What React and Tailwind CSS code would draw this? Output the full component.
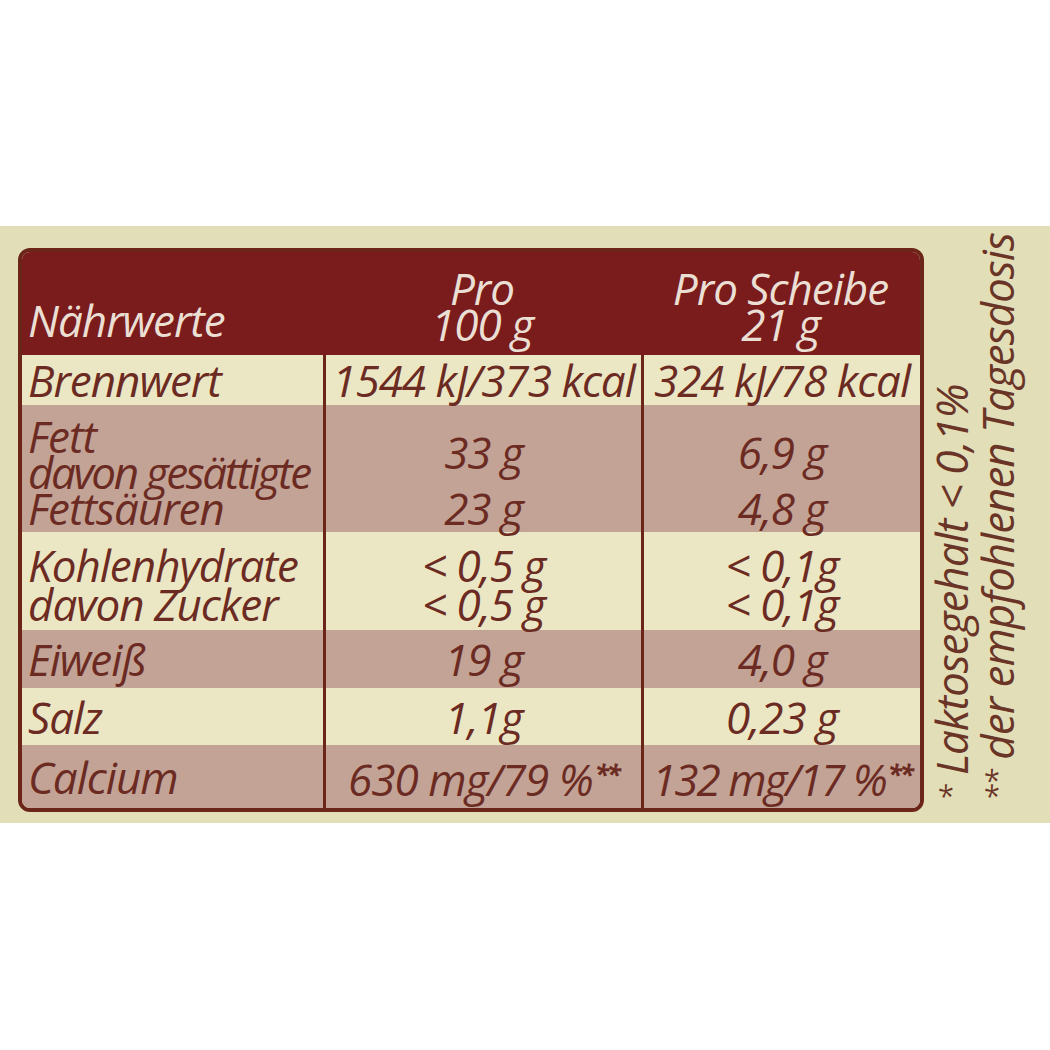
const font = { fontFamily: '"Open Sans", "Lato", sans-serif' };

const rows = [
  { bg: 'bg-[#ebe7c4]', h: 'h-[50px]', label: ['Brennwert'], a: ['1544 kJ/373 kcal'], b: ['324 kJ/78 kcal'], center: true },
  { bg: 'bg-[#c2a396]', h: 'h-[127px]', label: ['Fett', 'davon gesättigte', 'Fettsäuren'], a: ['33 g', '23 g'], b: ['6,9 g', '4,8 g'], fat: true },
  { bg: 'bg-[#ebe7c4]', h: 'h-[98px]', label: ['Kohlenhydrate', 'davon Zucker'], a: ['< 0,5 g', '< 0,5 g'], b: ['< 0,1g', '< 0,1g'], carbs: true },
  { bg: 'bg-[#c2a396]', h: 'h-[58px]', label: ['Eiweiß'], a: ['19 g'], b: ['4,0 g'], center: true },
  { bg: 'bg-[#ebe7c4]', h: 'h-[57px]', label: ['Salz'], a: ['1,1g'], b: ['0,23 g'], center: true },
  { bg: 'bg-[#c2a396]', h: 'h-[63px]', label: ['Calcium'], a: ['630 mg/79 %'], b: ['132 mg/17 %'], center: true, star: true },
];

// condensed a touch where the print is tighter than Open Sans
const tight = { 'davon gesättigte': 'tracking-[-2.4px]', '132 mg/17 %': 'tracking-[-2px]' };

function Cell({ row, lines, value }) {
  const star = row.star && value;
  if (row.center) {
    return (
      <div className={`flex flex-1 items-center ${value ? 'justify-center' : 'pl-[6px]'}`}>
        <span className={`leading-[40px] whitespace-nowrap ${tight[lines[0]] || ''}`}>
          {lines[0]}
          {star && <span className="text-[26px] align-[12px] ml-[2px] font-bold tracking-[-2px]">**</span>}
        </span>
      </div>
    );
  }
  if (row.fat && value) {
    return (
      <div className="flex flex-col items-center pt-[29px] gap-[20px] leading-[36px]">
        {lines.map((l, i) => <span key={i}>{l}</span>)}
      </div>
    );
  }
  return (
    <div
      className={`flex flex-col ${value ? 'items-center' : 'pl-[6px]'} ${row.fat ? 'pt-[13px] leading-[36px]' : 'pt-[14px] leading-[39px]'}`}
    >
      {lines.map((l, i) => (
        <span key={i} className={`whitespace-nowrap ${tight[l] || ''}`}>{l}</span>
      ))}
    </div>
  );
}

export default function App() {
  return (
    <div className="bg-white w-[1050px] h-[1050px] pt-[226px] overflow-hidden" style={font}>
      <div className="bg-[#e2dfb8] h-[597px] flex items-start">
        <div className="ml-[18px] mt-[22px] w-[906px] shrink-0 border-[4px] border-[#6b2519] rounded-t-[12px] rounded-b-[12px] overflow-hidden italic font-medium text-[44px] tracking-[-1px]">
          <div className="bg-[#7a1c1c] h-[103px] grid grid-cols-[301px_318px_279px] text-[#ebdfd4]">
            <div className="flex items-end pb-[15px] pl-[6px]">
              <span className="leading-[40px]">Nährwerte</span>
            </div>
            <div className="flex flex-col items-center pt-[18px] leading-[36px]">
              <span>Pro</span>
              <span>100 g</span>
            </div>
            <div className="flex flex-col items-center pt-[18px] leading-[36px]">
              <span>Pro Scheibe</span>
              <span>21 g</span>
            </div>
          </div>
          {rows.map((row, i) => (
            <div key={i} className={`${row.bg} ${row.h} grid grid-cols-[301px_318px_279px] text-[#6c2b22]`}>
              <Cell row={row} lines={row.label} />
              <div className="border-l-[3px] border-[#6b2519] flex flex-col">
                <Cell row={row} lines={row.a} value />
              </div>
              <div className="border-l-[3px] border-[#6b2519] flex flex-col">
                <Cell row={row} lines={row.b} value />
              </div>
            </div>
          ))}
        </div>
        <div className="ml-[4px] h-[575px] [writing-mode:vertical-rl] rotate-180 italic font-medium text-[44px] leading-[45px] text-[#6a3527] whitespace-nowrap tracking-[-1px]">
          <div>
            <span className="text-[30px]">*</span> Laktosegehalt &lt; 0,1%
          </div>
          <div>
            <span className="text-[30px]">**</span> der empfohlenen Tagesdosis
          </div>
        </div>
      </div>
    </div>
  );
}
